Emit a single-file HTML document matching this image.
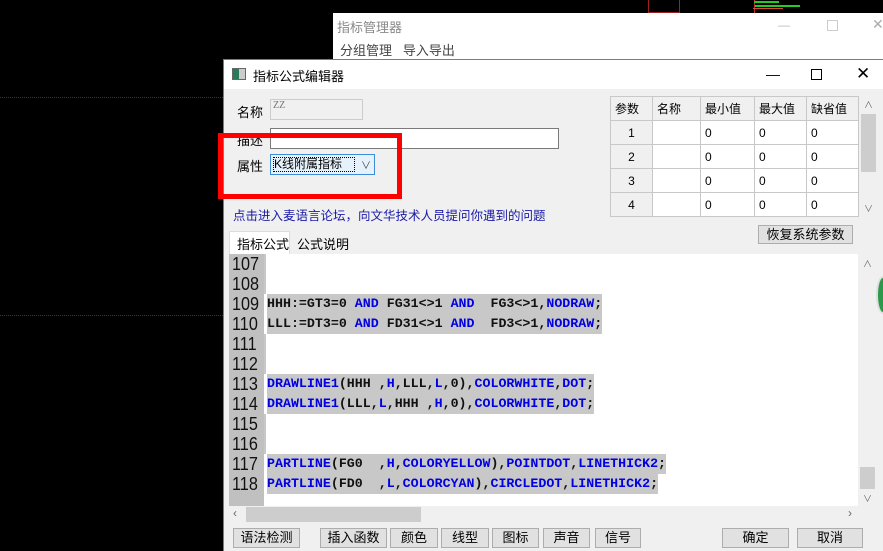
<!DOCTYPE html><html><head><meta charset="utf-8"><style>
*{margin:0;padding:0;box-sizing:border-box}
body{width:883px;height:551px;background:#000;position:relative;overflow:hidden;font-family:"Liberation Sans","Noto Sans CJK SC",sans-serif;font-size:12px;color:#000}
.a{position:absolute}
.btn{position:absolute;background:#e1e1e1;border:1px solid #adadad;text-align:center;line-height:17px;font-size:13px;height:20px;white-space:nowrap}
.code{font-family:"Liberation Mono",monospace;font-weight:bold;font-size:13.3px;white-space:pre;position:absolute;left:267px;height:20px;line-height:20px;background:#c8c8c8;color:#111}
.b{color:#0000e0}
.ln{position:absolute;left:232px;font-size:18px;line-height:20px;height:20px;color:#111;transform:scaleX(.9);transform-origin:left}
td{border:1px solid #c8c8c8;height:24px;font-size:12px;padding-left:4px}
</style></head><body>
<div class="a" style="left:0;top:97px;width:223px;border-top:1px dotted #7a1a1a"></div>
<div class="a" style="left:0;top:315px;width:223px;border-top:1px dotted #7a1a1a"></div>
<div class="a" style="left:648px;top:0;width:32px;height:13px;border:1px solid #a02020;border-top:none"></div>
<div class="a" style="left:754px;top:0;width:1px;height:13px;background:#c03030"></div>
<div class="a" style="left:755px;top:5px;width:45px;height:2px;background:#2c2"></div>
<div class="a" style="left:754px;top:1px;width:25px;height:2px;background:#2c2"></div>
<div class="a" style="left:753px;top:8px;width:30px;height:1px;background:#d44"></div>
<!-- back window -->
<div class="a" style="left:333px;top:13px;width:550px;height:47px;background:#fff"></div>
<div class="a" style="left:337px;top:17px;font-size:13px;color:#888">指标管理器</div>
<div class="a" style="left:778px;top:18px;color:#bbb">—</div>
<div class="a" style="left:827px;top:20px;width:11px;height:11px;border:1px solid #ccc"></div>
<div class="a" style="left:872px;top:16px;color:#aaa;font-size:14px">✕</div>
<div class="a" style="left:340px;top:40px;font-size:13px;color:#444">分组管理&nbsp;&nbsp;&nbsp;导入导出</div>
<!-- front window -->
<div class="a" style="left:223px;top:59px;width:660px;height:492px;background:#f0f0f0;border:1px solid #3c8ad8;border-right:none;border-bottom:none"></div>
<div class="a" style="left:224px;top:60px;width:659px;height:29px;background:#fff"></div>
<div class="a" style="left:232px;top:68px;width:14px;height:12px;background:linear-gradient(90deg,#2a7a5a 50%,#ccc 50%);border:1px solid #666"></div>
<div class="a" style="left:253px;top:66px;font-size:13px">指标公式编辑器</div>
<div class="a" style="left:766px;top:66px;font-size:14px">—</div>
<div class="a" style="left:811px;top:69px;width:11px;height:11px;border:1px solid #000"></div>
<div class="a" style="left:856px;top:64px;font-size:17px;font-weight:300">✕</div>
<div class="a" style="left:237px;top:102px;font-size:13px">名称</div>
<div class="a" style="left:270px;top:99px;width:93px;height:21px;border:1px solid #ccc;background:#f0f0f0;font-family:'Liberation Serif';font-size:10px;color:#777;padding-left:2px">ZZ</div>
<div class="a" style="left:237px;top:130px;font-size:13px">描述</div>
<div class="a" style="left:270px;top:128px;width:289px;height:21px;border:1px solid #7a7a7a;background:#fff"></div>
<div class="a" style="left:237px;top:156px;font-size:13px">属性</div>
<div class="a" style="left:270px;top:154px;width:105px;height:21px;border:1px solid #3c8ad8;background:#e5f1fb"></div>
<div class="a" style="left:273px;top:157px;width:82px;height:15px;border:1px dotted #000;font-size:12px;line-height:13px">K线附属指标</div>
<div class="a" style="left:361px;top:157px;font-size:10px;color:#444">∨</div>
<div class="a" style="left:218px;top:133px;width:184px;height:66px;border:5px solid #ff0000"></div>
<div class="a" style="left:233px;top:205px;font-size:12.5px;color:#1a1aa8">点击进入麦语言论坛，向文华技术人员提问你遇到的问题</div>
<!-- table -->
<table class="a" style="left:610px;top:96px;width:249px;border-collapse:collapse;background:#fff">
<tr style="background:#f0f0f0"><td style="width:42px">参数</td><td style="width:48px">名称</td><td style="width:54px">最小值</td><td style="width:52px">最大值</td><td>缺省值</td></tr>
<tr><td style="background:#f0f0f0;text-align:center;padding:0">1</td><td></td><td>0</td><td>0</td><td>0</td></tr>
<tr><td style="background:#f0f0f0;text-align:center;padding:0">2</td><td></td><td>0</td><td>0</td><td>0</td></tr>
<tr><td style="background:#f0f0f0;text-align:center;padding:0">3</td><td></td><td>0</td><td>0</td><td>0</td></tr>
<tr><td style="background:#f0f0f0;text-align:center;padding:0">4</td><td></td><td>0</td><td>0</td><td>0</td></tr>
</table>
<div class="a" style="left:859px;top:96px;width:17px;height:120px;background:#f0f0f0"></div>
<div class="a" style="left:861px;top:114px;width:15px;height:58px;background:#cdcdcd"></div>
<div class="a" style="left:864px;top:98px;font-size:9px;color:#666">∧</div>
<div class="a" style="left:864px;top:202px;font-size:9px;color:#666">∨</div>
<div class="btn" style="left:758px;top:225px;width:95px;height:19px;line-height:17px">恢复系统参数</div>
<!-- tabs -->
<div class="a" style="left:229px;top:231px;width:61px;height:23px;background:#fff;border:1px solid #ddd;border-bottom:none;font-size:13px;padding:2px 0 0 7px">指标公式</div>
<div class="a" style="left:297px;top:234px;font-size:13px">公式说明</div>
<!-- code -->
<div class="a" style="left:229px;top:254px;width:647px;height:252px;background:#fff"></div>
<div class="a" style="left:229px;top:254px;width:35px;height:252px;background:#c0c0c0"></div>
<div class="a" style="left:264px;top:254px;width:2px;height:40px;background:#c8c8c8"></div>
<div class="a" style="left:264px;top:334px;width:2px;height:40px;background:#c8c8c8"></div>
<div class="a" style="left:264px;top:414px;width:2px;height:40px;background:#c8c8c8"></div>
<div class="ln" style="top:254px">107</div><div class="ln" style="top:274px">108</div><div class="ln" style="top:294px">109</div><div class="ln" style="top:314px">110</div><div class="ln" style="top:334px">111</div><div class="ln" style="top:354px">112</div><div class="ln" style="top:374px">113</div><div class="ln" style="top:394px">114</div><div class="ln" style="top:414px">115</div><div class="ln" style="top:434px">116</div><div class="ln" style="top:454px">117</div><div class="ln" style="top:474px">118</div>
<div class="code" style="top:294px">HHH:=GT3=0 <span class="b">AND</span> FG31&lt;&gt;1 <span class="b">AND</span>  FG3&lt;&gt;1,<span class="b">NODRAW</span>;</div>
<div class="code" style="top:314px">LLL:=DT3=0 <span class="b">AND</span> FD31&lt;&gt;1 <span class="b">AND</span>  FD3&lt;&gt;1,<span class="b">NODRAW</span>;</div>
<div class="code" style="top:374px"><span class="b">DRAWLINE1</span>(HHH ,<span class="b">H</span>,LLL,<span class="b">L</span>,0),<span class="b">COLORWHITE</span>,<span class="b">DOT</span>;</div>
<div class="code" style="top:394px"><span class="b">DRAWLINE1</span>(LLL,<span class="b">L</span>,HHH ,<span class="b">H</span>,0),<span class="b">COLORWHITE</span>,<span class="b">DOT</span>;</div>
<div class="code" style="top:454px"><span class="b">PARTLINE</span>(FG0  ,<span class="b">H</span>,<span class="b">COLORYELLOW</span>),<span class="b">POINTDOT</span>,<span class="b">LINETHICK2</span>;</div>
<div class="code" style="top:474px"><span class="b">PARTLINE</span>(FD0  ,<span class="b">L</span>,<span class="b">COLORCYAN</span>),<span class="b">CIRCLEDOT</span>,<span class="b">LINETHICK2</span>;</div>
<div class="a" style="left:858px;top:254px;width:18px;height:252px;background:#f0f0f0"></div>
<div class="a" style="left:860px;top:467px;width:15px;height:22px;background:#cdcdcd"></div>
<div class="a" style="left:863px;top:257px;font-size:9px;color:#666">∧</div>
<div class="a" style="left:863px;top:492px;font-size:9px;color:#666">∨</div>
<div class="a" style="left:229px;top:506px;width:629px;height:17px;background:#f0f0f0"></div>
<div class="a" style="left:246px;top:507px;width:175px;height:15px;background:#cdcdcd"></div>
<div class="a" style="left:233px;top:506px;font-size:12px;color:#666">‹</div>
<div class="a" style="left:848px;top:506px;font-size:12px;color:#666">›</div>
<div class="a" style="left:876px;top:276px;width:14px;height:38px;border-radius:50%;background:#2a9a4a;border:2px solid #ddd"></div>
<!-- buttons -->
<div class="btn" style="left:233px;top:528px;width:67px">语法检测</div>
<div class="btn" style="left:320px;top:528px;width:67px">插入函数</div>
<div class="btn" style="left:390px;top:528px;width:48px">颜色</div>
<div class="btn" style="left:441px;top:528px;width:48px">线型</div>
<div class="btn" style="left:492px;top:528px;width:47px">图标</div>
<div class="btn" style="left:543px;top:528px;width:47px">声音</div>
<div class="btn" style="left:595px;top:528px;width:46px">信号</div>
<div class="btn" style="left:722px;top:528px;width:67px">确定</div>
<div class="btn" style="left:797px;top:528px;width:66px">取消</div>
</body></html>
